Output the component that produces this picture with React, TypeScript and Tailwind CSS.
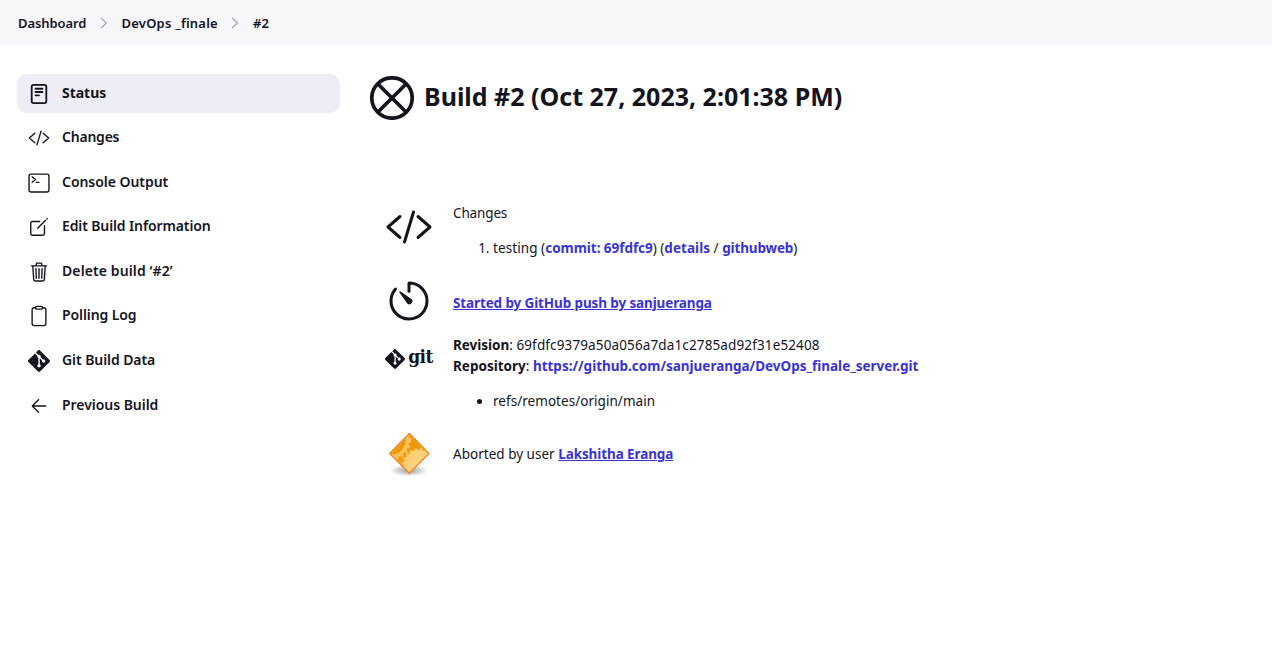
import React from "react";
import { SiGit } from "react-icons/si";

type IconProps = { className?: string };

function Svg({ className, children, width = 32 }: IconProps & { children: React.ReactNode; width?: number }) {
  return (
    <svg
      viewBox="0 0 512 512"
      className={className}
      fill="none"
      stroke="currentColor"
      strokeWidth={width}
      strokeLinecap="round"
      strokeLinejoin="round"
    >
      {children}
    </svg>
  );
}

function StatusIcon({ className }: IconProps) {
  return (
    <Svg className={className} width={42}>
      <rect x="86" y="42" width="340" height="428" rx="44" />
      <path d="M176 134h160M176 210h160M176 286h80" />
    </Svg>
  );
}

function CodeIcon({ className }: IconProps) {
  return (
    <Svg className={className}>
      <path d="M160 368L32 256l128-112M352 368l128-112-128-112M304 96l-96 320" />
    </Svg>
  );
}

function TerminalIcon({ className }: IconProps) {
  return (
    <Svg className={className}>
      <rect x="24" y="48" width="464" height="416" rx="48" />
      <path d="M96 112l80 64-80 64M192 240h64" />
    </Svg>
  );
}

function EditIcon({ className }: IconProps) {
  return (
    <Svg className={className}>
      <path d="M384 224v184a40 40 0 01-40 40H104a40 40 0 01-40-40V168a40 40 0 0140-40h167.48" />
      <path
        stroke="none"
        fill="currentColor"
        d="M459.94 53.25a16.06 16.06 0 00-23.22-.56L424.35 65a8 8 0 000 11.31l11.34 11.32a8 8 0 0011.34 0l12.06-12c6.1-6.09 6.67-16.01.85-22.38zM399.34 90L218.82 270.2a9 9 0 00-2.31 3.93L208.16 299a3.91 3.91 0 004.86 4.86l24.85-8.35a9 9 0 003.93-2.31L422 112.66a9 9 0 000-12.66l-9.95-10a9 9 0 00-12.71 0z"
      />
    </Svg>
  );
}

function TrashIcon({ className }: IconProps) {
  return (
    <Svg className={className}>
      <path d="M112 112l20 320c.95 18.49 14.4 32 32 32h184c17.67 0 30.87-13.51 32-32l20-320M80 112h352M192 112V72a23.93 23.93 0 0124-24h80a23.93 23.93 0 0124 24v40M256 176v224M184 176l8 224M328 176l-8 224" />
    </Svg>
  );
}

function ClipboardIcon({ className }: IconProps) {
  return (
    <Svg className={className}>
      <path d="M336 64h32a48 48 0 0148 48v320a48 48 0 01-48 48H144a48 48 0 01-48-48V112a48 48 0 0148-48h32" />
      <rect x="176" y="32" width="160" height="64" rx="26.13" />
    </Svg>
  );
}

function ArrowIcon({ className }: IconProps) {
  return (
    <Svg className={className}>
      <path d="M244 400L100 256l144-144M120 256h292" />
    </Svg>
  );
}

function TimerIcon({ className }: IconProps) {
  return (
    <Svg className={className}>
      <path d="M112.91 128A191.85 191.85 0 0064 254c-1.18 106.35 85.65 193.8 192 194 106.2.2 192-85.83 192-192 0-104.54-83.55-189.61-187.5-192a4.36 4.36 0 00-4.5 4.37V152" />
      <path
        stroke="none"
        fill="currentColor"
        d="M233.38 278.63l-79-113a8.13 8.13 0 0111.32-11.32l113 79a32.5 32.5 0 01-37.25 53.26 33.21 33.21 0 01-8.07-7.94z"
      />
    </Svg>
  );
}

function AbortedStatusIcon({ className }: IconProps) {
  return (
    <svg viewBox="0 0 44 44" className={className} fill="none" stroke="currentColor" strokeWidth="3.7">
      <circle cx="22" cy="22" r="20.2" />
      <path d="M7.7 7.7l28.6 28.6M36.3 7.7L7.7 36.3" />
    </svg>
  );
}

function AbortedBadge({ className }: IconProps) {
  return (
    <svg viewBox="0 0 48 48" className={className}>
      <defs>
        <radialGradient id="shade">
          <stop offset="0" stopColor="#666" stopOpacity=".65" />
          <stop offset=".6" stopColor="#888" stopOpacity=".35" />
          <stop offset="1" stopColor="#aaa" stopOpacity="0" />
        </radialGradient>
        <linearGradient id="amber" x1="0" y1="0" x2="0" y2="1">
          <stop offset="0" stopColor="#e89200" />
          <stop offset="1" stopColor="#f2a418" />
        </linearGradient>
        <linearGradient id="gear" x1="0" y1="0" x2="1" y2="1">
          <stop offset="0" stopColor="#fbc968" />
          <stop offset="1" stopColor="#ffdf9e" />
        </linearGradient>
        <clipPath id="diamond">
          <path d="M24.3 3.5L44 23.4 24.3 43.3 4.6 23.4z" />
        </clipPath>
      </defs>
      <ellipse cx="24" cy="40.5" rx="19.5" ry="6" fill="url(#shade)" />
      <path d="M24.3 3.5L44 23.4 24.3 43.3 4.6 23.4z" fill="url(#amber)" />
      <g clipPath="url(#diamond)">
        <circle cx="6" cy="10" r="16.5" fill="none" stroke="#f8c25f" strokeWidth="3.6" />
        <circle cx="6" cy="10" r="19.2" fill="none" stroke="#f8c25f" strokeWidth="2.2" strokeDasharray="2.8 2.8" />
        <circle cx="34" cy="35" r="15" fill="url(#gear)" />
        <circle cx="34" cy="35" r="15.6" fill="none" stroke="#fbcb6e" strokeWidth="2.4" strokeDasharray="2.7 2.2" />
      </g>
      <path d="M24.3 5L42.5 23.4 24.3 41.8 6.1 23.4z" fill="none" stroke="#ffd488" strokeWidth=".8" strokeOpacity=".6" />
      <path
        d="M24.3 3.5L44 23.4 24.3 43.3 4.6 23.4z"
        fill="none"
        stroke="#f5811c"
        strokeWidth="1.3"
        strokeLinejoin="round"
      />
    </svg>
  );
}

function Chevron() {
  return (
    <svg
      viewBox="0 0 8 12"
      className="h-[12px] w-[8px] text-[#a9a9b8]"
      fill="none"
      stroke="currentColor"
      strokeWidth="1.3"
      strokeLinecap="round"
      strokeLinejoin="round"
    >
      <path d="M1.5 1.2L6.3 6 1.5 10.8" />
    </svg>
  );
}

const tasks = [
  { label: "Status", icon: <StatusIcon className="size-[22px]" />, text: "font-bold tracking-[-0.03px]", active: true },
  { label: "Changes", icon: <CodeIcon className="size-[22px]" />, text: "font-semibold tracking-[-0.22px]" },
  { label: "Console Output", icon: <TerminalIcon className="size-[22px]" />, text: "font-semibold tracking-[-0.05px]" },
  { label: "Edit Build Information", icon: <EditIcon className="size-[22px]" />, text: "font-semibold tracking-[-0.12px]" },
  { label: "Delete build ‘#2’", icon: <TrashIcon className="size-[22px]" />, text: "font-semibold tracking-[0.11px]" },
  { label: "Polling Log", icon: <ClipboardIcon className="size-[22px]" />, text: "font-semibold tracking-[-0.1px]" },
  { label: "Git Build Data", icon: <SiGit className="size-[22px]" />, text: "font-semibold tracking-[-0.08px]" },
  { label: "Previous Build", icon: <ArrowIcon className="size-[22px]" />, text: "font-semibold tracking-[-0.04px]" },
];

function Link({ className, children }: { className: string; children: React.ReactNode }) {
  return (
    <a href="#" className={"font-bold text-[#3833d8] " + className}>
      {children}
    </a>
  );
}

export default function App() {
  return (
    <div className="flex h-[664px] w-[1272px] flex-col overflow-hidden bg-white font-['Noto_Sans',sans-serif] text-[#14141f]">
      <nav className="flex h-[46px] shrink-0 items-center bg-[#f6f6fb] pl-[18px] text-[13px] font-semibold">
        <a href="#" className="w-[81.5px] pt-[2px] tracking-[-0.09px]">Dashboard</a>
        <Chevron />
        <a href="#" className="ml-[14px] w-[109.5px] pt-[2px] tracking-[0.22px]">DevOps _finale</a>
        <Chevron />
        <span className="ml-[14px] pt-[2px]">#2</span>
      </nav>

      <div className="flex flex-1">
        <aside className="flex w-[340px] shrink-0 flex-col gap-[5.6px] pt-[28px] pl-[17px]">
          {tasks.map((task) => (
            <a
              key={task.label}
              href="#"
              className={
                "flex h-[39px] shrink-0 items-center gap-[12px] rounded-[10px] pl-[11px] text-[14px] " +
                (task.active ? "bg-[#eeedf6]" : "")
              }
            >
              {task.icon}
              <span className={(task.active ? "pb-[2px] " : "pb-[3px] ") + task.text}>{task.label}</span>
            </a>
          ))}
        </aside>

        <main className="flex flex-col pt-[30px] pl-[30px]">
          <h1 className="flex h-[44px] items-center gap-[10px] text-[25px] font-bold">
            <AbortedStatusIcon className="size-[44px]" />
            <span className="pb-[2px]">Build #2 (Oct 27, 2023, 2:01:38 PM)</span>
          </h1>

          <div className="mt-[82px] flex flex-col pl-[15px] text-[13.5px] leading-[21px]">
            <div className="flex h-[75px] gap-[20px]">
              <CodeIcon className="mt-[1px] size-[48px]" />
              <div className="pt-[1px]">
                <p className="tracking-[-0.14px]">Changes</p>
                <ol className="mt-[14px] list-decimal pl-[40px]">
                  <li>
                    <span className="tracking-[0.08px]">testing (</span>
                    <Link className="tracking-[-0.04px]">commit: 69fdfc9</Link>) (
                    <Link className="tracking-[0.05px]">details</Link> /{" "}
                    <Link className="tracking-[-0.14px]">githubweb</Link>)
                  </li>
                </ol>
              </div>
            </div>

            <div className="flex h-[57px] gap-[20px]">
              <TimerIcon className="size-[48px]" />
              <p className="pt-[16px]">
                <Link className="tracking-[-0.12px] underline">Started by GitHub push by sanjueranga</Link>
              </p>
            </div>

            <div className="flex h-[96px] gap-[20px]">
              <div className="flex h-[49px] w-[48px] items-center justify-between">
                <SiGit className="size-[20px]" />
                <span className="-mt-[5px] font-['DejaVu_Serif',serif] text-[19px] font-bold tracking-[-0.5px] [font-stretch:condensed]">
                  git
                </span>
              </div>
              <div className="pt-[1px]">
                <p>
                  <b className="tracking-[-0.02px]">Revision</b>:{" "}
                  <span className="tracking-[0.13px]">69fdfc9379a50a056a7da1c2785ad92f31e52408</span>
                </p>
                <p>
                  <b>Repository</b>:{" "}
                  <Link className="tracking-[-0.01px]">https://github.com/sanjueranga/DevOps_finale_server.git</Link>
                </p>
                <ul className="mt-[14px] list-disc pl-[40px]">
                  <li className="tracking-[0.04px]">refs/remotes/origin/main</li>
                </ul>
              </div>
            </div>

            <div className="flex h-[50px] gap-[20px]">
              <AbortedBadge className="size-[48px]" />
              <p className="pt-[14px]">
                <span className="tracking-[0.02px]">Aborted by user</span>{" "}
                <Link className="tracking-[-0.1px] underline">Lakshitha Eranga</Link>
              </p>
            </div>
          </div>
        </main>
      </div>
    </div>
  );
}
